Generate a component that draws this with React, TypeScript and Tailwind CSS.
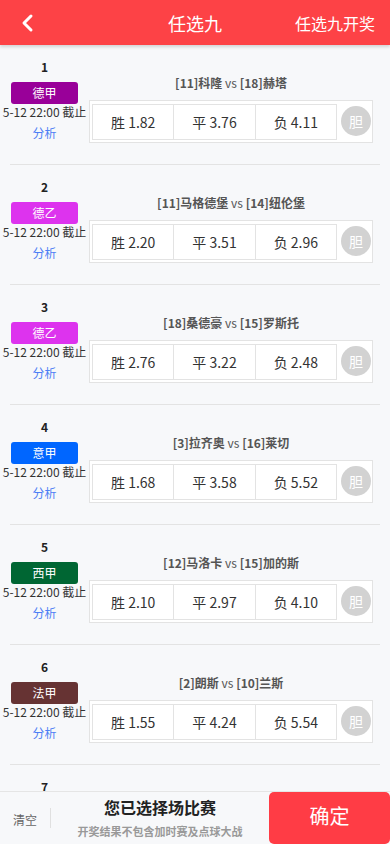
import React from "react";

type Match = {
  no: number;
  league: string;
  color: string;
  home: string;
  away: string;
  odds: [string, string, string];
};

const matches: Match[] = [
  { no: 1, league: "德甲", color: "bg-[#990099]", home: "[11]科隆", away: "[18]赫塔", odds: ["1.82", "3.76", "4.11"] },
  { no: 2, league: "德乙", color: "bg-[#dd33ee]", home: "[11]马格德堡", away: "[14]纽伦堡", odds: ["2.20", "3.51", "2.96"] },
  { no: 3, league: "德乙", color: "bg-[#dd33ee]", home: "[18]桑德豪", away: "[15]罗斯托", odds: ["2.76", "3.22", "2.48"] },
  { no: 4, league: "意甲", color: "bg-[#0066ff]", home: "[3]拉齐奥", away: "[16]莱切", odds: ["1.68", "3.58", "5.52"] },
  { no: 5, league: "西甲", color: "bg-[#006633]", home: "[12]马洛卡", away: "[15]加的斯", odds: ["2.10", "2.97", "4.10"] },
  { no: 6, league: "法甲", color: "bg-[#663333]", home: "[2]朗斯", away: "[10]兰斯", odds: ["1.55", "4.24", "5.54"] },
];

function Row({ m }: { m: Match }) {
  const labels = ["胜", "平", "负"];
  return (
    <div className="h-[120px] shrink-0 px-0 pt-[14px] flex relative">
      <div className="w-[89px] shrink-0 flex flex-col items-center">
        <div className="h-4 leading-4 text-[12px] font-bold text-[#222]">{m.no}</div>
        <div
          className={`mt-[7px] w-[67px] h-[22px] rounded-[3px] ${m.color} text-white text-[12px] leading-[22px] text-center`}
        >
          {m.league}
        </div>
        <div className="h-4 leading-4 text-[12px] text-[#333] whitespace-nowrap">5-12 22:00 截止</div>
        <div className="mt-[5px] h-4 leading-4 text-[12px] text-[#4d7ef5]">分析</div>
      </div>
      <div className="flex-1 pr-[17px] flex flex-col">
        <div className="mt-[16px] h-4 leading-4 text-[12px] font-bold text-[#555] text-center whitespace-nowrap">
          {m.home} <span className="font-normal">vs</span> {m.away}
        </div>
        <div className="mt-[9px] h-[43px] border border-[#e3e3e3] bg-white pl-[2px] pt-[3px] pr-[1px] flex">
          <div className="w-[245px] h-[36px] border border-[#e3e3e3] flex">
            {m.odds.map((o, i) => (
              <div
                key={i}
                className={`flex-1 flex items-center justify-center text-[14px] text-[#333] ${
                  i < 2 ? "border-r border-[#e3e3e3]" : ""
                }`}
              >
                {labels[i]} {o}
              </div>
            ))}
          </div>
          <div className="ml-[4px] mt-[2px] w-[30px] h-[30px] rounded-full bg-[#d2d2d2] text-white text-[14px] flex items-center justify-center">
            胆
          </div>
        </div>
      </div>
      <div className="absolute left-[10px] right-[10px] bottom-0 h-px bg-[#e3e3e3]" />
    </div>
  );
}

export default function App() {
  return (
    <div
      className="w-[390px] h-[844px] overflow-hidden flex flex-col bg-[#f7f8fa]"
      style={{ fontFamily: '"Noto Sans CJK SC", "Noto Sans", sans-serif' }}
    >
      <div className="h-[45px] shrink-0 bg-[#fd4246] relative flex items-center justify-center shadow-[0_2px_3px_rgba(0,0,0,0.15)] z-10">
        <svg className="absolute left-[20px] top-[13px]" width="14" height="20" viewBox="0 0 14 20">
          <path d="M11 3 L4 10 L11 17" fill="none" stroke="white" strokeWidth="3" strokeLinecap="round" strokeLinejoin="round" />
        </svg>
        <div className="text-white text-[18px] leading-none">任选九</div>
        <div className="absolute right-[15px] top-0 h-[45px] flex items-center text-white text-[16px]">任选九开奖</div>
      </div>
      <div className="flex-1 overflow-hidden flex flex-col">
        {matches.map((m) => (
          <Row key={m.no} m={m} />
        ))}
        <div className="h-[26px] shrink-0 pt-[14px] flex">
          <div className="w-[89px] flex justify-center">
            <div className="h-4 leading-4 text-[12px] font-bold text-[#222]">7</div>
          </div>
        </div>
      </div>
      <div className="h-[53px] shrink-0 border-t border-[#e5e5e5] bg-[#f7f8fa] flex">
        <div className="w-[50px] flex items-center justify-center text-[12px] text-[#666] pt-[4px]">清空</div>
        <div className="w-px h-[20px] bg-[#e0e0e0] mt-[16px]" />
        <div className="w-[218px] flex flex-col items-center pt-[3px]">
          <div className="text-[16px] font-bold text-[#222] leading-[24px]">您已选择场比赛</div>
          <div className="text-[11px] font-bold text-[#999] leading-[16px] mt-[4px]">开奖结果不包含加时赛及点球大战</div>
        </div>
        <div className="flex-1 bg-[#ff3c45] rounded-[5px] text-white text-[20px] flex items-center justify-center pb-[4px]">
          确定
        </div>
      </div>
    </div>
  );
}
